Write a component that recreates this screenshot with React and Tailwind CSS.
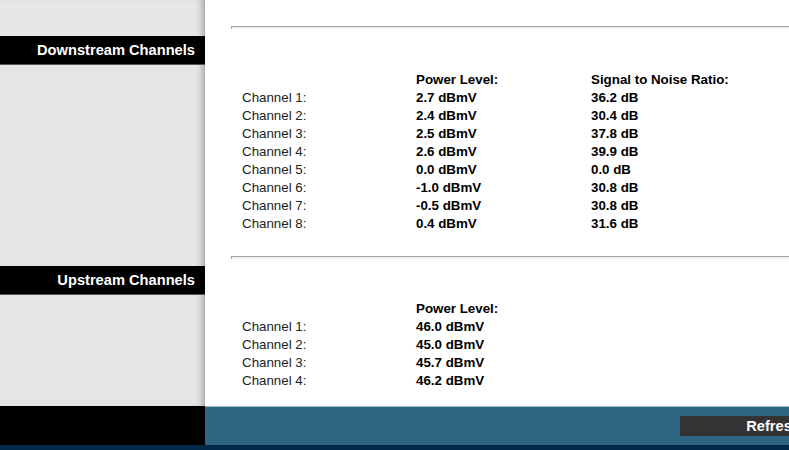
import React from "react";

const down = [
  ["Channel 1:", "2.7 dBmV", "36.2 dB"],
  ["Channel 2:", "2.4 dBmV", "30.4 dB"],
  ["Channel 3:", "2.5 dBmV", "37.8 dB"],
  ["Channel 4:", "2.6 dBmV", "39.9 dB"],
  ["Channel 5:", "0.0 dBmV", "0.0 dB"],
  ["Channel 6:", "-1.0 dBmV", "30.8 dB"],
  ["Channel 7:", "-0.5 dBmV", "30.8 dB"],
  ["Channel 8:", "0.4 dBmV", "31.6 dB"],
];

const up = [
  ["Channel 1:", "46.0 dBmV"],
  ["Channel 2:", "45.0 dBmV"],
  ["Channel 3:", "45.7 dBmV"],
  ["Channel 4:", "46.2 dBmV"],
];

function Hr() {
  return (
    <div className="ml-[26px] h-[3px] border-t border-l border-[#a3a3a3] bg-[#f3f3f3]" />
  );
}

function SideBar({ children }) {
  return (
    <div className="h-[29px] bg-black border-b border-[#555] flex items-center justify-end pr-[10px] text-white font-bold text-[14.67px]">
      {children}
    </div>
  );
}

export default function App() {
  return (
    <div
      className="w-[789px] h-[450px] overflow-hidden bg-white flex flex-col"
      style={{ fontFamily: '"Liberation Sans", Arial, sans-serif' }}
    >
      <div className="flex h-[406px]">
        <div className="w-[205px] shrink-0 bg-[#e6e6e6] shadow-[inset_-7px_0_6px_-4px_rgba(0,0,0,0.28)] flex flex-col">
          <div className="h-[36px]" />
          <SideBar>Downstream Channels</SideBar>
          <div className="h-[201px]" />
          <SideBar>Upstream Channels</SideBar>
        </div>
        <div className="flex-1 flex flex-col text-[13.33px] leading-[18px]">
          <div className="h-[26px]" />
          <Hr />
          <div className="h-[42px]" />
          <div className="pl-[37px]">
            <div className="flex">
              <div className="w-[174px]" />
              <div className="w-[175px] font-bold text-black">Power Level:</div>
              <div className="font-bold text-black">Signal to Noise Ratio:</div>
            </div>
            {down.map((r) => (
              <div key={r[0]} className="flex">
                <div className="w-[174px] text-[#222]">{r[0]}</div>
                <div className="w-[175px] font-bold text-black">{r[1]}</div>
                <div className="font-bold text-black">{r[2]}</div>
              </div>
            ))}
          </div>
          <div className="h-[23px]" />
          <Hr />
          <div className="h-[41px]" />
          <div className="pl-[37px]">
            <div className="flex">
              <div className="w-[174px]" />
              <div className="font-bold text-black">Power Level:</div>
            </div>
            {up.map((r) => (
              <div key={r[0]} className="flex">
                <div className="w-[174px] text-[#222]">{r[0]}</div>
                <div className="font-bold text-black">{r[1]}</div>
              </div>
            ))}
          </div>
        </div>
      </div>
      <div className="flex h-[39px]">
        <div className="w-[205px] shrink-0 bg-black" />
        <div className="flex-1 bg-[#2e6580] border-t border-[#9db8c7] flex items-start overflow-hidden">
          <div className="ml-[475px] mt-[9px] shrink-0 w-[187px] h-[20px] bg-[#333333] flex items-center justify-center text-white font-bold text-[14.67px]">
            Refresh
          </div>
        </div>
      </div>
      <div className="h-[5px] bg-[#012a4a]" />
    </div>
  );
}
